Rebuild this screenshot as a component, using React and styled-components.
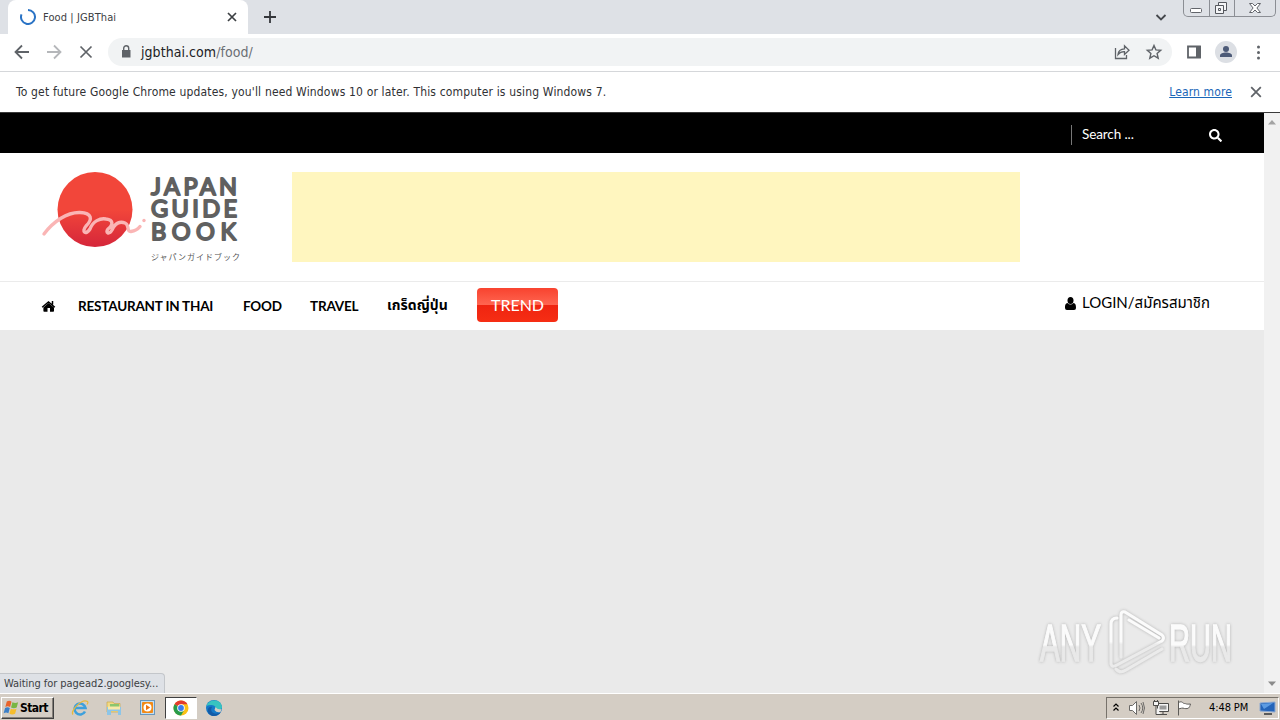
import styled, { createGlobalStyle, css } from "styled-components";
import { FaSearch } from "react-icons/fa";

const GlobalStyle = createGlobalStyle`
  * {
    box-sizing: border-box;
  }
  body {
    margin: 0;
    overflow: hidden;
    background: #fff;
  }
`;

const uiFont = css`
  font-family: "DejaVu Sans Condensed", "Noto Sans", sans-serif;
`;

const Screen = styled.div`
  display: flex;
  flex-direction: column;
  width: 1280px;
  height: 720px;
  ${uiFont}
`;

const Label = styled.span`
  flex: none;
  white-space: nowrap;
  letter-spacing: ${props => props.$spacing || 0}px;
`;

// Browser
const TabStrip = styled.div`
  display: flex;
  flex: none;
  height: 34px;
  padding-left: 8px;
  background: #dee1e6;
`;

const Tab = styled.div`
  display: flex;
  align-items: center;
  width: 240px;
  height: 34px;
  padding: 0 10px 0 12px;
  border-radius: 8px 8px 0 0;
  background: #fff;
  color: #3c4043;
  font-size: 11px;

  & span {
    flex: 1;
    margin-left: 7px;
  }
`;

const TabActions = styled.div`
  display: flex;
  flex: 1;
  align-items: center;
  justify-content: space-between;
  padding: 0 15px 0 14px;
`;

const WindowButtons = styled.div`
  display: flex;
  width: 93px;
  height: 17px;
  margin-right: 4px;
  border: 1px solid #8b8e94;
  border-top: 0;
  border-radius: 0 0 5px 5px;

  & svg + svg {
    border-left: 1px solid #8b8e94;
  }
`;

const Toolbar = styled.div`
  display: flex;
  flex: none;
  align-items: center;
  height: 38px;
  padding: 0 12px 1px 12px;
  border-bottom: 1px solid #d5d7da;
  background: #fff;
`;

const NavIcons = styled.div`
  display: flex;
  gap: 12px;
  width: 96px;
`;

const AddressBar = styled.div`
  display: flex;
  align-items: center;
  width: 1064px;
  height: 28px;
  padding: 0 8px 0 12px;
  border-radius: 14px;
  background: #f1f3f4;
  color: #202124;
  font-size: 14px;

  & > span {
    flex: 1;
    margin-left: 9px;
  }
  & i {
    color: #6b6f74;
    font-style: normal;
  }
  & svg + svg {
    margin-left: 12px;
  }
`;

const ToolbarEnd = styled.div`
  display: flex;
  align-items: center;
  gap: 11px;
  margin-left: 12px;
`;

const InfoBar = styled.div`
  display: flex;
  flex: none;
  align-items: center;
  height: 41px;
  padding: 0 16px 1px 16px;
  border-bottom: 1px solid #3a3a3a;
  background: #fff;
  color: #303134;
  font-size: 12px;
`;

const LearnMore = styled.a`
  margin-left: auto;
  margin-right: 16px;
  color: #1a66b8;
  text-decoration: underline;
  letter-spacing: 0.130px;
`;

const Viewport = styled.div`
  display: flex;
  flex: none;
  height: 580px;
`;

const Scrollbar = styled.div`
  display: flex;
  flex-direction: column;
  justify-content: space-between;
  width: 16px;
  padding: 6px 4px;
  background: #f1f1f1;
`;

// Site
const Site = styled.div`
  position: relative;
  width: 1264px;
  height: 580px;
  background: #eaeaea;
  font-family: Lato, "Noto Sans Thai", "Liberation Sans", sans-serif;
`;

const TopBar = styled.div`
  display: flex;
  align-items: center;
  justify-content: flex-end;
  height: 40px;
  padding: 4px 42px 0 0;
  background: #000;
`;

const SearchBox = styled.div`
  display: flex;
  align-items: center;
  justify-content: space-between;
  width: 151px;
  height: 20px;
  padding-left: 10px;
  border-left: 1px solid #777;
  color: #fff;
  font-size: 13.500px;

  & span {
    margin-top: -2px;
  }
`;

const Masthead = styled.header`
  display: flex;
  height: 128px;
  padding: 19px 0 0 40px;
  background: #fff;
`;

const LogoArt = styled.svg`
  overflow: visible;
`;

const AdSlot = styled.div`
  width: 728px;
  height: 90px;
  margin-left: 44px;
  background: #fff6bf;
`;

const MainNav = styled.nav`
  display: flex;
  align-items: center;
  height: 49px;
  padding: 0 54px 0 41px;
  border-top: 1px solid #ebebeb;
  background: #fff;
  color: #000;
`;

const NavItem = styled.a`
  margin-top: -1px;
  margin-left: ${props => props.$gap || 30}px;
  width: ${props => props.$width}px;
  white-space: nowrap;
  font-size: ${props => (props.$thai ? 14 : 13.5)}px;
  font-weight: 700;
  letter-spacing: ${props => (props.$thai ? 0 : -0.2)}px;
`;

const TrendButton = styled.button`
  width: 81px;
  height: 34px;
  margin: -3px 0 0 30px;
  padding: 0;
  border: 0;
  border-radius: 4px;
  background: linear-gradient(#f8432f 0%, #ff6550 49%, #ef2410 50%, #f62e14 100%);
  color: #fff;
  font: 16px Lato, sans-serif;
`;

const Login = styled.a`
  display: flex;
  align-items: center;
  width: 145px;
  margin: -5px 0 0 auto;
  font-size: 15px;
  white-space: nowrap;

  & svg {
    flex: none;
    margin-right: 6px;
  }
`;

const StatusBubble = styled.div`
  position: absolute;
  bottom: 0;
  left: 0;
  width: 165px;
  height: 20px;
  padding: 3px 0 0 4px;
  border: 1px solid #c3c6ca;
  border-width: 1px 1px 0 0;
  border-radius: 0 4px 0 0;
  background: #dee1e6;
  color: #3c4043;
  font-size: 11px;
  line-height: 14px;
  ${uiFont}
`;

const Watermark = styled.svg`
  position: absolute;
  right: 24px;
  bottom: 14px;
`;

// Taskbar
const Taskbar = styled.div`
  display: flex;
  flex: none;
  align-items: center;
  height: 27px;
  padding: 1px 1px 0 1px;
  border-top: 1px solid #fff;
  background: #d4cdc4;
  color: #000;
  font-size: 11px;
`;

const StartButton = styled.div`
  display: flex;
  align-items: center;
  width: 53px;
  height: 22px;
  padding-left: 1px;
  border: 1px solid;
  border-color: #fff #404040 #404040 #fff;
  box-shadow: inset -1px -1px #85807a;
  font-size: 12px;
  font-weight: 700;
`;

const TaskButton = styled.div`
  display: flex;
  align-items: center;
  justify-content: center;
  width: ${props => (props.$active ? 32 : 34)}px;
  height: 22px;
  margin-left: ${props => props.$gap || 0}px;
  ${props => props.$active && css`
    border: 1px solid;
    border-color: #404040 #fff #fff #404040;
    background: #fff;
  `}
`;

const Tray = styled.div`
  display: flex;
  align-items: center;
  width: 173px;
  height: 22px;
  margin-left: auto;
  padding-left: 5px;
  border: 1px solid;
  border-color: #77726b #fff #fff #77726b;
`;

const TrayIcon = styled.svg`
  flex: none;
  margin-left: ${props => props.$gap}px;
`;

const Clock = styled.span`
  width: 40px;
  margin: 0 10px 0 16px;
  white-space: nowrap;
  letter-spacing: -0.1px;
`;

function Icon({ size = 20, children, color = "#5f6368", width = 1.8 }) {
  return (
    <svg width={size} height={size} viewBox="0 0 20 20" fill="none" stroke={color} strokeWidth={width}>
      {children}
    </svg>
  );
}

function BrowserTabs() {
  return (
    <TabStrip>
      <Tab>
        <svg width="16" height="16" viewBox="0 0 16 16" fill="none" stroke="#2a73c5" strokeWidth="2">
          <path d="M8 1A7 7 0 1 1 1.5 5.4" />
        </svg>
        <Label $spacing={0.1}>Food | JGBThai</Label>
        <svg width="12" height="12" viewBox="0 0 12 12" stroke="#3c4043" strokeWidth="1.7">
          <path d="M2 2l8 8M10 2l-8 8" />
        </svg>
      </Tab>
      <TabActions>
        <svg width="16" height="16" viewBox="0 0 16 16" stroke="#35373b" strokeWidth="1.8">
          <path d="M8 2v12M2 8h12" />
        </svg>
        <svg width="14" height="14" viewBox="0 0 14 14" fill="none" stroke="#45484d" strokeWidth="1.8">
          <path d="M2.5 5L7 9.5L11.5 5" />
        </svg>
      </TabActions>
      <WindowButtons>
        <svg width="25" height="16" fill="#fff" stroke="#62656b">
          <rect x="6.500" y="8.500" width="11" height="4" rx="1" />
        </svg>
        <svg width="25" height="16" fill="#f4f5f7" stroke="#55585e">
          <path d="M8.500 2.500h8v8h-8z" />
          <path d="M5.500 5.500h8v8h-8zM8.500 8.500h2v2h-2z" />
        </svg>
        <svg width="41" height="16" fill="#fff" stroke="#62656b">
          <path d="M14.500 3.500h3l2.500 2.500l2.500-2.500h3l-3.600 4.500l3.600 4.500h-3l-2.500-2.500l-2.500 2.500h-3l3.600-4.500z" />
        </svg>
      </WindowButtons>
    </TabStrip>
  );
}

function BrowserToolbar() {
  return (
    <Toolbar>
      <NavIcons>
        <Icon><path d="M17 10H4M10 3.500L3.500 10l6.500 6.500" /></Icon>
        <Icon color="#b5b7ba"><path d="M3 10h13M10 3.500l6.500 6.500l-6.500 6.500" /></Icon>
        <Icon width={1.7}><path d="M4.500 4.500l11 11M15.500 4.500l-11 11" /></Icon>
      </NavIcons>
      <AddressBar>
        <svg width="12" height="14" viewBox="0 0 12 14" fill="#5f6368">
          <path d="M2 5h8.500v7.500H2z" />
          <path d="M3.700 5.500V3.300a2.500 2.500 0 0 1 5 0V5.500" fill="none" stroke="#5f6368" strokeWidth="1.4" />
        </svg>
        <Label $spacing={0.06}>jgbthai.com<i>/food/</i></Label>
        <Icon width={1.3}>
          <path d="M3.500 6v10.500h11V13M6 12.500c.4-4 3-5.600 6.500-5.700V3.700L17 8.200l-4.500 4.300V9.600C9.500 9.500 7.700 10.300 6 12.500z" />
        </Icon>
        <Icon width={1.4}>
          <path d="M10 3.500l1.900 4.400l4.800.4l-3.600 3.200l1.100 4.700L10 13.700l-4.200 2.500l1.100-4.700L3.300 8.300l4.800-.4z" />
        </Icon>
      </AddressBar>
      <ToolbarEnd>
        <Icon>
          <path d="M4 4.500h12v11H4z" />
          <path d="M12 4h5v12h-5z" fill="#5f6368" stroke="none" />
        </Icon>
        <svg width="22" height="22" viewBox="0 0 22 22" fill="#4d5b78">
          <circle cx="11" cy="11" r="11" fill="#dcdfe4" />
          <circle cx="11" cy="8" r="3" />
          <path d="M5 16v-1.500c0-2 3-3 6-3s6 1 6 3V16z" />
        </svg>
        <svg width="20" height="20" viewBox="0 0 20 20" fill="#5f6368">
          <circle cx="10.500" cy="5" r="1.500" />
          <circle cx="10.500" cy="10.500" r="1.500" />
          <circle cx="10.500" cy="16" r="1.500" />
        </svg>
      </ToolbarEnd>
    </Toolbar>
  );
}

function Logo() {
  const words = ["JAPAN", "GUIDE", "BOOK"];

  return (
    <LogoArt width="208" height="100" viewBox="0 0 208 100">
      <defs>
        <linearGradient id="sun" x1="0" y1="0" x2="0" y2="1">
          <stop offset="0.5" stopColor="#f2463a" />
          <stop offset="1" stopColor="#d5263a" />
        </linearGradient>
      </defs>
      <circle cx="55" cy="37.500" r="37.500" fill="url(#sun)" />
      <path
        d="M4 62C13 50 27 40 40 40.500C52 41 53 47 46 54C41 60 46 63.500 50 57C53 49 60 46 66 47C74 48 73 53 68 57C65 61 69 63 72 58C75 51 80 49 85 51C90 53 86 60 91 59.500C95 59 98 57 100 54.500"
        fill="none" stroke="#fab5b5" strokeWidth="3.400" strokeLinecap="round" strokeLinejoin="round"
      />
      <circle cx="104" cy="48.500" r="1.700" fill="#fab5b5" />
      {words.map((word, i) => (
        <text
          key={word} x="111" y={22.5 + i * 22.7} textLength={word === "BOOK" ? 85 : 86}
          fontFamily="Lato, sans-serif" fontSize="23.500" fontWeight="400"
          fill="#606060" stroke="#606060" strokeWidth="1.900" strokeLinejoin="round"
        >
          {word}
        </text>
      ))}
      <text x="111" y="88" textLength="89" fontFamily="'Noto Sans CJK JP', sans-serif" fontSize="8" fill="#555">
        ジャパンガイドブック
      </text>
    </LogoArt>
  );
}

function AnyRun() {
  return (
    <Watermark width="204" height="72" viewBox="0 0 204 72" opacity="0.850">
      <defs>
        <linearGradient id="shine" gradientUnits="userSpaceOnUse" x1="0" y1="0" x2="0" y2="72">
          <stop offset="0.480" stopColor="#fff" />
          <stop offset="0.520" stopColor="#ececec" />
        </linearGradient>
        <linearGradient id="shineText" x1="0" y1="0" x2="0" y2="1">
          <stop offset="0.540" stopColor="#fff" />
          <stop offset="0.580" stopColor="#e9e9e9" />
        </linearGradient>
        <filter id="glow" x="-10%" y="-10%" width="120%" height="120%">
          <feDropShadow dx="0" dy="0" stdDeviation="1.500" floodColor="#888" floodOpacity="0.700" />
        </filter>
      </defs>
      <g
        filter="url(#glow)" fill="url(#shineText)" stroke="url(#shineText)" strokeWidth="0.800"
        fontFamily="'Liberation Sans Narrow', 'Liberation Sans', sans-serif" fontSize="32"
      >
        <text transform="translate(4 53.500) scale(1 1.640)" textLength="61" lengthAdjust="spacingAndGlyphs">ANY</text>
        <text transform="translate(133 53.500) scale(1 1.640)" textLength="63" lengthAdjust="spacingAndGlyphs">RUN</text>
      </g>
      <path
        d="M81 11q-6 0-6 6v40q1 4 6 1L126 34q3-3 0-6L89 5q-4-1-4 3v42M93 13L123 31M80 62q4 5 10 1L126 42"
        fill="none" stroke="url(#shine)" strokeWidth="3" strokeLinecap="round" strokeLinejoin="round" filter="url(#glow)"
      />
    </Watermark>
  );
}

function SitePage() {
  return (
    <Site>
      <TopBar>
        <SearchBox>
          <Label $spacing={-0.1}>Search ...</Label>
          <FaSearch size={13} />
        </SearchBox>
      </TopBar>
      <Masthead>
        <Logo />
        <AdSlot />
      </Masthead>
      <MainNav>
        <svg width="15" height="14" viewBox="0 0 15 14">
          <path d="M7.500 4L13 8.500V12q0 .8-.8.800H9V9H6.500v3.800H3.200q-.8 0-.8-.8V8.500z" />
          <path d="M1.200 8.200L7.500 2.900l6.300 5.300M11.500 2v3.500" fill="none" stroke="#000" strokeWidth="1.500" />
        </svg>
        <NavItem $gap={22} $width={135}>RESTAURANT IN THAI</NavItem>
        <NavItem $width={37}>FOOD</NavItem>
        <NavItem $width={47}>TRAVEL</NavItem>
        <NavItem $width={60} $thai>เกร็ดญี่ปุ่น</NavItem>
        <TrendButton>TREND</TrendButton>
        <Login>
          <svg width="11" height="13" viewBox="0 0 11 13">
            <ellipse cx="5.500" cy="3.500" rx="3" ry="3.500" />
            <path d="M2.500 6C0 6.500 0 9 0 11q0 2 2 2h7q2 0 2-2c0-2 0-4.500-2.500-5Q5.500 9 2.500 6z" />
          </svg>
          LOGIN/สมัครสมาชิก
        </Login>
      </MainNav>
      <StatusBubble>
        <Label $spacing={-0.05}>Waiting for pagead2.googlesy...</Label>
      </StatusBubble>
      <AnyRun />
    </Site>
  );
}

function WindowsFlag() {
  return (
    <svg width="17" height="18" viewBox="0 0 18 18">
      <path d="M4 2q3-1.500 5 .3L7.500 8q-2.500-1.500-5 0z" fill="#e8632b" />
      <path d="M10 3q3 1.500 6 0l-1.500 5.500q-3 1.500-6 0z" fill="#79b644" />
      <path d="M2.200 9q2.500-1.500 5 0L5.700 14.500q-2.500-1.500-5 0z" fill="#3b7fc8" />
      <path d="M8.300 9.700q3 1.500 6 0L12.800 15q-3 1.500-6 0z" fill="#f6bd2c" />
    </svg>
  );
}

function SystemTaskbar() {
  return (
    <Taskbar>
      <StartButton>
        <WindowsFlag />
        <Label $spacing={-0.6}>Start</Label>
      </StartButton>
      <TaskButton $gap={9}>
        <svg width="18" height="18" viewBox="0 0 18 18" fill="none">
          <path d="M14 12.500A5.500 5.500 0 1 1 14.500 9H5" stroke="#3da0dc" strokeWidth="2.600" />
          <path d="M2 15.500C-1 12 11-1 16.500 2.500q1 1-.5 3" stroke="#e7b93c" strokeWidth="1.200" />
        </svg>
      </TaskButton>
      <TaskButton>
        <svg width="18" height="18" viewBox="0 0 18 18">
          <path d="M2 3h6l1 1.500h6V13H2z" fill="#f1d983" stroke="#c9a94e" strokeWidth="0.700" />
          <path d="M5 5h9v4H5z" fill="#8ac66f" />
          <path d="M2 8h14v8h-3v-4H6v4H2z" fill="#8cc5e8" />
          <path d="M3 7.500h12v3H3z" fill="#f8e9a9" />
        </svg>
      </TaskButton>
      <TaskButton>
        <svg width="18" height="18" viewBox="0 0 18 18">
          <rect x="1.500" y="1.500" width="14" height="14" fill="#c5dff2" stroke="#6897bd" />
          <rect x="3" y="3" width="11" height="11" rx="1" fill="#f28a18" />
          <circle cx="8.500" cy="8.500" r="4" fill="#fff" />
          <path d="M7 5.800v5.400l4.200-2.700z" fill="#ee7512" />
        </svg>
      </TaskButton>
      <TaskButton $active>
        <svg width="16" height="16" viewBox="0 0 16 16">
          <circle cx="8" cy="8" r="7.500" fill="#fbc116" />
          <path d="M8 8L1.500 4.250A7.500 7.500 0 0 1 14.500 4.250H8z" fill="#e33b2e" />
          <path d="M1.500 4.250A7.500 7.500 0 0 0 8 15.500L11.200 10z" fill="#279b4b" />
          <circle cx="8" cy="8" r="3.800" fill="#fff" />
          <circle cx="8" cy="8" r="2.900" fill="#3b7ded" />
        </svg>
      </TaskButton>
      <TaskButton>
        <svg width="18" height="18" viewBox="0 0 18 18">
          <circle cx="9" cy="9" r="8" fill="#1479c9" />
          <path d="M1.500 7C3 0 16-1 17 8c0 3-4 4-6 2.500c1-4-5-6-9.500-3.500z" fill="#37c3c0" />
          <path d="M7 8c-3 5 3 9 9 5c-3 5-9 5-12 2c-3-4 0-8 3-7z" fill="#135ba6" />
          <path d="M10.500 8q2 3 6 2l-1 3q-4 1-6-2z" fill="#d4cdc4" />
        </svg>
      </TaskButton>
      <Tray>
        <svg width="8" height="12" viewBox="0 0 8 12" fill="none" stroke="#000" strokeWidth="1.200">
          <path d="M1.500 4.500L4 2l2.500 2.500M1.500 8.500L4 6l2.500 2.500" />
        </svg>
        <TrayIcon $gap={8} width="18" height="18" viewBox="0 0 18 18" fill="#fff" stroke="#6b6a68">
          <path d="M1.500 6.500h3l4-4v13l-4-4h-3z" />
          <path d="M11 6q2 3 0 6M13 4q3.500 5 0 10M15 3q3 6 0 12" fill="none" />
        </TrayIcon>
        <TrayIcon $gap={6} width="18" height="18" viewBox="0 0 18 18" fill="#f4f4f4" stroke="#4c4b49">
          <path d="M5.500 4.500h11v8h-11zM8 15.500h7M11 13v2" />
          <path d="M7.500 6.500h7v4h-7z" fill="#9a9a9a" stroke="none" />
          <path d="M1.500 2.500h5v4h-5zM4 7v8.500h5M2.500 1v2M5.500 1v2" />
        </TrayIcon>
        <TrayIcon $gap={5} width="18" height="18" viewBox="0 0 18 18" fill="#fff" stroke="#5d5b58">
          <path d="M3.500 16.500v-15M3.500 3.500c4-2 4 1 6 1s1 1 6 .5c-1 4-2 5-6 4.500c-2-1-4 0-6 .5" />
        </TrayIcon>
        <Clock>4:48 PM</Clock>
        <svg width="17" height="16" viewBox="0 0 17 16">
          <path d="M1 3l15-1v10l-15-1z" fill="#2464b9" stroke="#8ca9d2" />
          <path d="M2 4l12-1l-9 6z" fill="#5c9be2" />
          <path d="M5 13h8v2H5z" fill="#5a5a5a" />
        </svg>
      </Tray>
    </Taskbar>
  );
}

export default function App() {
  return (
    <Screen>
      <GlobalStyle />
      <BrowserTabs />
      <BrowserToolbar />
      <InfoBar>
        <Label $spacing={0.163}>
          To get future Google Chrome updates, you'll need Windows 10 or later. This computer is using Windows 7.
        </Label>
        <LearnMore>Learn more</LearnMore>
        <Icon size={16} width={2.2}><path d="M4 4l12 12M16 4L4 16" /></Icon>
      </InfoBar>
      <Viewport>
        <SitePage />
        <Scrollbar>
          <svg width="8" height="6" fill="#a3a3a3"><path d="M0 5.500L4 1l4 4.500z" /></svg>
          <svg width="8" height="6" fill="#8b8b8b"><path d="M0 .5L4 5L8 .5z" /></svg>
        </Scrollbar>
      </Viewport>
      <SystemTaskbar />
    </Screen>
  );
}
